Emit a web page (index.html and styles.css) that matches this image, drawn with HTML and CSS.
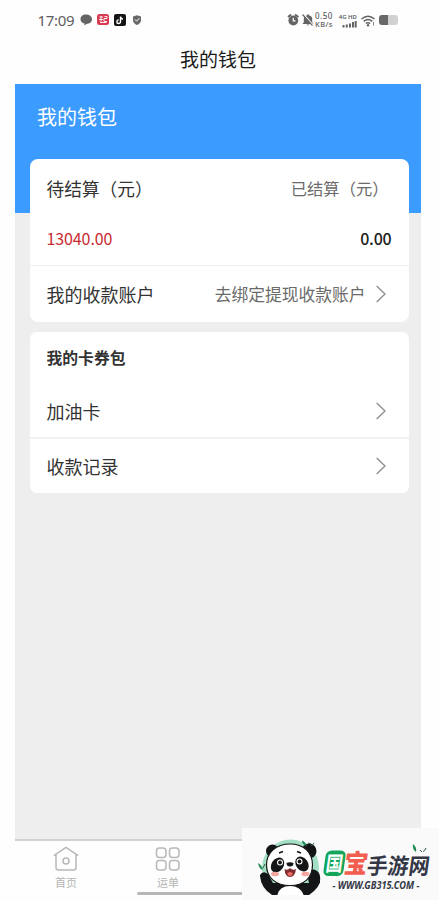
FILE: index.html
```html
<!DOCTYPE html>
<html lang="zh-CN">
<head>
<meta charset="UTF-8">
<title>我的钱包</title>
<link rel="stylesheet" href="styles.css">
</head>
<body>
<div class="phone">
  <div class="status">
    <span class="time">17:09</span>
    <svg class="notices" width="64" height="14" viewBox="0 0 64 14">
      <path d="M6 1.500c3.300 0 6 2 6 4.800s-2.700 4.700-5.500 4.700L4.500 12.500V10.600C2 10 .5 8.300 .5 6.300.5 3.500 2.700 1.500 6 1.500z" fill="#646464"/>
      <rect x="17" y="1" width="12" height="11" rx="2.500" fill="#d83a52"/>
      <path d="M19.500 4h3.500M19 6.500h4M21 3v6M24.500 3.500h2.500v2h-3v3h3M20 9.500h6.500" fill="none" stroke="#fff" stroke-width=".9"/>
      <rect x="34" y="1" width="12" height="12" rx="2" fill="#151515"/>
      <path d="M40.500 3.500v5.200a1.800 1.800 0 1 1-1.800-1.800M40.500 4c.3 1.300 1.200 2 2.500 2.100" fill="none" stroke="#fff" stroke-width="1.400"/>
      <path d="M57 2.300l4 1.200v3.400c0 2.500-1.700 4.000-4 5.000-2.300-1-4-2.500-4-5.000V3.500z" fill="#686868"/>
      <path d="M55 6.500l1.600 1.700 2.700-3" fill="none" stroke="#fff"/>
    </svg>
    <svg class="alerts" width="27" height="14" viewBox="0 0 27 14">
      <path d="M1 4l3-2.500M8 1.500L11.500 4" stroke="#646464" stroke-width="1.800"/>
      <circle cx="6.300" cy="7.500" r="4.900" fill="#646464"/>
      <path d="M6.300 4.800v3h2.200" fill="none" stroke="#fff" stroke-width="1.200"/>
      <path d="M15.500 11l1.300-1.800V6a4 4 0 0 1 3.500-3.800V1.300h1.400v.9a4 4 0 0 1 3.500 3.800v3.200l1.300 1.800zM19.500 11.500h3l-1.500 1.300z" fill="#646464"/>
      <path d="M16.600 1.200l9.700 11" stroke="#fff" stroke-width="1.200"/>
      <path d="M15.500 1.500l10 11.200" stroke="#646464" stroke-width="1.200"/>
    </svg>
    <div class="speed"><span>0.50</span><span>KB/s</span></div>
    <div class="signal">
      <span>4G HD</span>
      <svg width="15" height="7" viewBox="0 0 15 7"><path d="M1.500 4v2.500M4.800 3.500v3M8 2.500v4M11 1v5.500M13.700 0v6.500" stroke="#646464" stroke-width="2"/></svg>
    </div>
    <svg class="wifi" width="15" height="13" viewBox="0 0 15 13">
      <path d="M.5 5q6.500-5.500 13 0M2.700 7.300q4.300-3.500 8.600 0M4.800 9.500q2.200-1.600 4.400 0" fill="none" stroke="#646464" stroke-width="1.500"/>
      <circle cx="7" cy="11.300" r="1.200" fill="#646464"/><path d="M12.500 8v3.500" stroke="#8a8a8a"/>
    </svg>
    <span class="battery"></span>
  </div>
  <h1 class="title">我的钱包</h1>
  <main class="content">
    <div class="banner">我的钱包</div>
    <section class="card wallet">
      <div class="row labels"><span class="unsettled">待结算（元）</span><span class="muted">已结算（元）</span></div>
      <div class="row amounts"><span class="pending">13040.00</span><span class="settled">0.00</span></div>
      <div class="row account"><span>我的收款账户</span><span class="muted">去绑定提现收款账户</span>
        <svg class="arrow" width="10" height="18" viewBox="0 0 10 18"><path d="M.7 1l8.300 8-8.300 8"/></svg></div>
    </section>
    <section class="card coupons">
      <h2>我的卡券包</h2>
      <div class="row fuel"><span>加油卡</span><svg class="arrow" width="10" height="18" viewBox="0 0 10 18"><path d="M.7 1l8.300 8-8.300 8"/></svg></div>
      <div class="row records"><span>收款记录</span><svg class="arrow" width="10" height="18" viewBox="0 0 10 18"><path d="M.7 1l8.300 8-8.300 8"/></svg></div>
    </section>
  </main>
  <nav class="tabs">
    <div class="tab">
      <svg width="26" height="26" viewBox="0 0 26 26"><path d="M.8 9.700L13 1.500l12.200 8.200M3 8.500v13q0 2.500 2.500 2.500h15q2.500 0 2.500-2.500v-13"/><circle cx="13" cy="15" r="3"/></svg>
      <span>首页</span>
    </div>
    <div class="tab">
      <svg width="26" height="26" viewBox="0 0 26 26"><rect x="1.500" y="2" width="9.500" height="9.500" rx="3"/><rect x="14.500" y="2" width="9.500" height="9.500" rx="3"/><rect x="1.500" y="14.500" width="9.500" height="9.500" rx="3"/><rect x="14.500" y="14.500" width="9.500" height="9.500" rx="3"/></svg>
      <span>运单</span>
    </div>
  </nav>
</div>
<div class="home-bar"></div>
<div class="badge">
  <svg width="197" height="73" viewBox="0 0 197 73">
    <defs><clipPath id="round"><path d="M18 0h62v48q-2 12-13 19H30Q19 60 18 48z"/></clipPath></defs>
    <circle cx="48.500" cy="40" r="28.500" fill="#a3dfc4" clip-path="url(#round)"/>
    <g clip-path="url(#round)">
      <path d="M18 47q3-5 8-1l5 9h36l-2-9q4-7 10-3 4 3 3 10v17H18z" fill="#141516"/>
      <path d="M35 68q2-10 13-10t14 10z" fill="#fff"/>
    </g>
    <circle cx="30.500" cy="23" r="6.500" fill="#141516"/><circle cx="67" cy="23" r="7.500" fill="#141516"/>
    <path d="M48 16c14 0 22.500 8.500 22.500 21 0 13-8.500 20.500-22.500 20.500S24.500 50 24.500 37C24.500 24.500 34 16 48 16z" fill="#fff" stroke="#141516" stroke-width="1.200"/>
    <ellipse cx="35.500" cy="37" rx="6" ry="8" transform="rotate(35 35.500 37)" fill="#141516"/>
    <ellipse cx="60" cy="36" rx="6" ry="8" transform="rotate(-35 60 36)" fill="#141516"/>
    <circle cx="38" cy="34.500" r="3" fill="#fff"/><circle cx="38" cy="34.500" r="1.900" fill="#141516"/>
    <circle cx="57.500" cy="33.500" r="3" fill="#fff"/><circle cx="57.500" cy="33.500" r="1.900" fill="#141516"/>
    <path d="M37 25l4-1.500M55 23.500l4 1.500" stroke="#141516" stroke-width="1.500"/>
    <ellipse cx="33" cy="46" rx="4" ry="2.200" fill="#f4a6a0"/><ellipse cx="63.500" cy="46" rx="4" ry="2.200" fill="#f4a6a0"/>
    <path d="M44.500 35q3.500-1.500 7 0 0 3.500-3.500 3.500t-3.500-3.500z" fill="#141516"/>
    <path d="M42.500 41q3 2 5.500-1 3 3 6 1-1 8-6 8t-5.500-8z" fill="#812d32"/><path d="M45 45.500q3-3 6 0-3 5-6 0z" fill="#ed6c67"/>
    <path d="M60 12.500q3.500 1 5 5.500-5-1-5-5.500zM16 35q1 6 5 7-1-5-5-7zM171 16q4 3 3 8-4-3-3-8z" fill="#218b58"/>
    <path d="M66 15l3 1M72 15q-1 2.500-3 2.500M178 22l2 2M184 20q-1 3-3 3.500M23 36l-2 4" fill="none" stroke="#315c49"/>
    <g transform="translate(5 0) skewX(-8)">
      <rect x="82.500" y="22.500" width="20" height="25.500" rx="5.500" fill="#13a65b"/>
      <text transform="translate(84 42.500) scale(1 1.200)" class="brand seal-text" textLength="17" lengthAdjust="spacingAndGlyphs">国</text>
      <text x="102" y="45" class="brand coral" textLength="24" lengthAdjust="spacingAndGlyphs">宝</text>
      <text x="125.500" y="46" class="brand dark" textLength="62.500" lengthAdjust="spacingAndGlyphs">手游网</text>
    </g>
    <text x="90.500" y="61" class="url" textLength="87" lengthAdjust="spacingAndGlyphs">- WWW.GB315.COM -</text>
  </svg>
</div>
</body>
</html>
```
FILE: styles.css
```css
* { box-sizing: border-box; }
body {
  margin: 0;
  height: 900px;
  overflow: hidden;
  background: #fefefe;
  color: #333;
  font-family: "Noto Sans CJK SC", sans-serif;
}
.phone {
  width: 406px;
  height: 900px;
  margin-left: 15px;
  display: flex;
  flex-direction: column;
}
.status {
  height: 40px;
  padding: 0 23px 0 22.500px;
  display: flex;
  align-items: center;
  color: #5d5d5d;
}
.time { width: 42.500px; font: 15px "Noto Sans", sans-serif; letter-spacing: -.3px; }
.notices { flex: none; }
.alerts { margin-left: auto; }
.speed { width: 21px; margin-left: 1px; display: flex; flex-direction: column; font: 500 8px/8.500px "Noto Sans", sans-serif; white-space: nowrap; letter-spacing: .5px; }
.speed span + span { font-size: 7.500px; letter-spacing: .4px; }
.signal { width: 19px; margin-left: 2px; display: flex; flex-direction: column; align-items: flex-end; font: 600 6px/8px "Noto Sans", sans-serif; white-space: nowrap; }
.wifi { margin-left: 4px; }
.battery { width: 19px; height: 10px; margin-left: 3px; border-radius: 3px; background: linear-gradient(90deg, #686868 48%, #d1d1d1 48%); }
.title { height: 44px; margin: 0; font-size: 19px; font-weight: 400; line-height: 37px; text-align: center; color: #1b1b1b; }
.content { height: 755px; background: #eee; }
.banner { height: 128.500px; padding: 17px 22px; background: #3c9bff; color: #fff; font-size: 20px; line-height: 31px; }
.card { width: 379px; margin-left: 14.500px; border-radius: 8px; background: #fff; font-size: 18px; }
.wallet { height: 163px; margin-top: -54px; position: relative; }
.row { display: flex; align-items: center; padding: 0 17px; justify-content: space-between; }
.labels { height: 58px; }
.unsettled { font-size: 17.700px; }
.muted { color: #6b6b6b; font-size: 16.750px; }
.labels .muted { margin-right: 3px; font-size: 16.300px; }
.amounts { height: 49px; border-bottom: 1.500px solid #f0f0f0; font-size: 16px; line-height: 43px; align-items: flex-start; }
.pending { color: #c82c33; letter-spacing: -.1px; }
.settled { color: #222; font-weight: 500; letter-spacing: -.2px; }
.account { height: 56px; padding-right: 22.500px; }
.account .muted { margin-left: auto; margin-right: 10.500px; }
.arrow { flex: none; fill: none; stroke: #929292; stroke-width: 1.500; }
.coupons { height: 161px; margin-top: 10.500px; border-radius: 7px; }
.coupons h2 { height: 52px; margin: 0; padding-left: 17px; font-size: 15.800px; line-height: 52px; font-weight: 600; }
.fuel { height: 55px; padding-right: 22.500px; border-bottom: 2px solid #f0f0f0; }
.records { height: 54px; padding-right: 22.500px; }
.tabs { height: 61px; border-top: 2px solid #d2d2d2; display: flex; }
.tab { width: 102px; padding-top: 5px; display: flex; flex-direction: column; align-items: center; color: #b5b5b5; font-size: 11px; line-height: 21px; }
.tab svg { fill: none; stroke: #b8b8b8; stroke-width: 1.500; }
.home-bar { position: absolute; left: 137px; top: 892px; width: 120px; height: 3px; border-radius: 2px; background: #b7b7b7; }
.badge { position: absolute; left: 242px; top: 827.500px; width: 197px; height: 73px; background: #fafafa; }
.badge svg { display: block; }
.brand { font-weight: 900; }
.seal-text { font-size: 17px; fill: #fff; font-weight: 700; }
.coral { font-size: 26px; fill: #f25f50; }
.dark { font-size: 22px; fill: #343746; font-weight: 700; }
.url { font: italic 700 9.800px "Noto Sans", sans-serif; fill: #343746; }
```
